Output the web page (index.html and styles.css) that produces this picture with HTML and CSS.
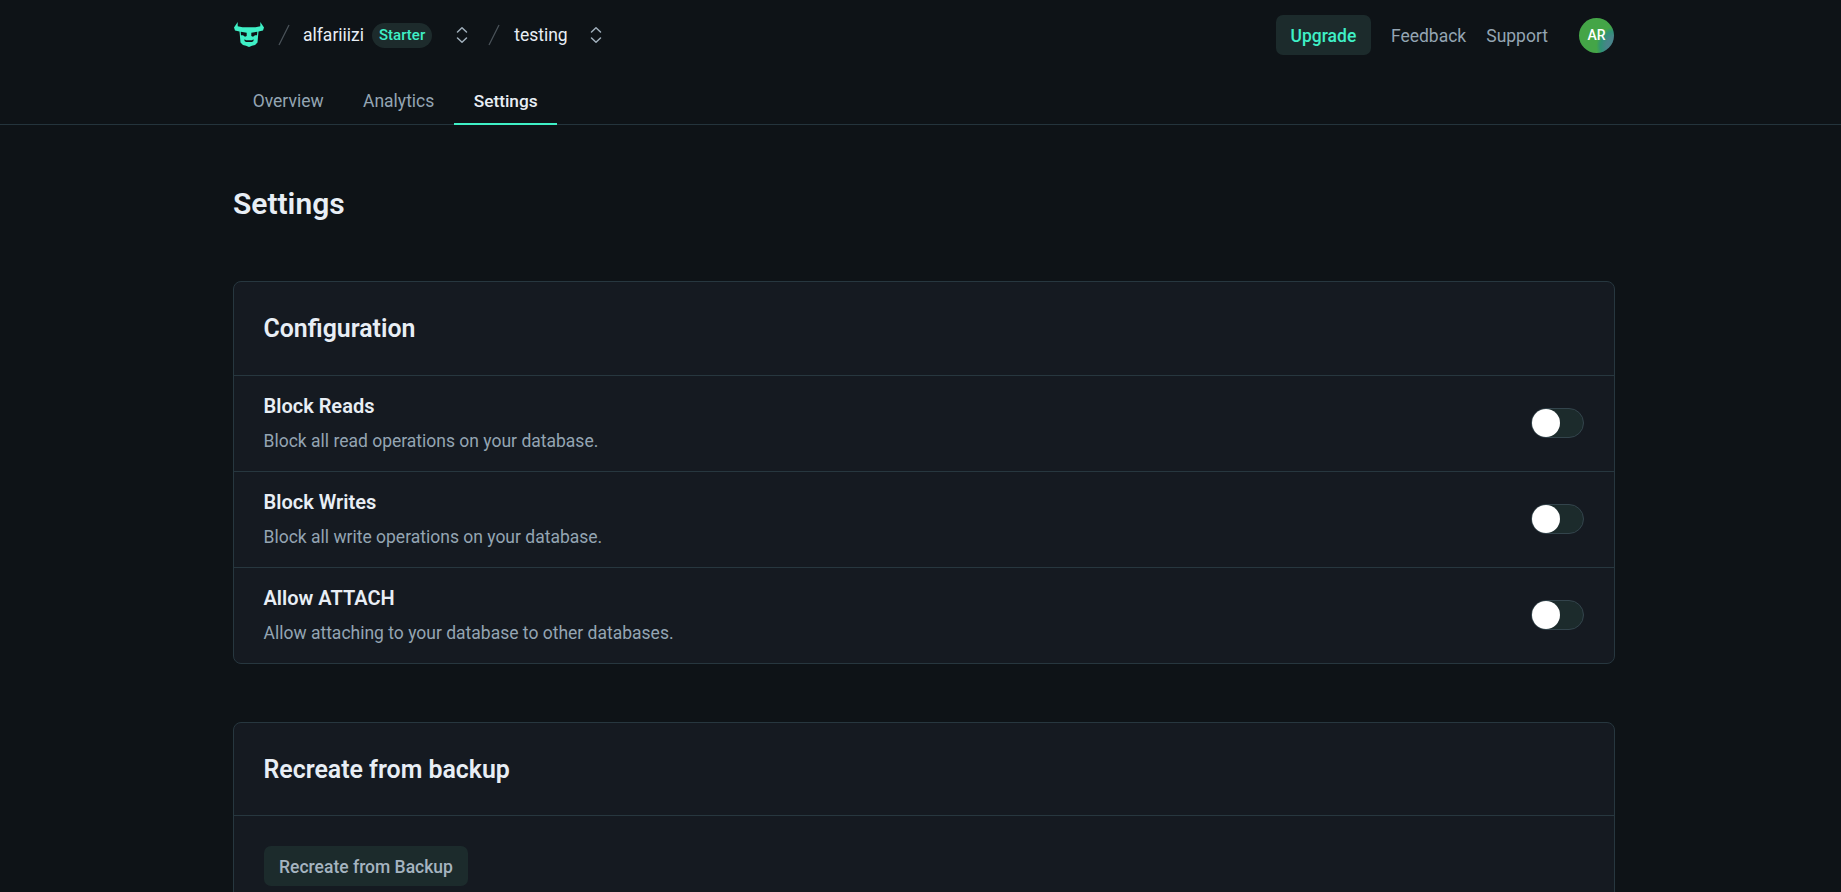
FILE: index.html
```html
<!DOCTYPE html>
<html lang="en">
<head>
<meta charset="utf-8">
<title>Settings</title>
<link rel="stylesheet" href="styles.css">
</head>
<body>
<header class="header">
  <div class="container topbar">
    <nav class="crumbs">
      <svg class="logo" viewBox="0 0 32 26" width="32" height="26"><path fill="#3ff0c6" d="M4.700 0 1 5.500 2 8.500 6.500 9.500 7 15 7.500 20.500 10 23 13 23.700 16 25 19 23.700 22 23 24.500 20.500 25 15 25.500 9.500 30 8.500 31 5.500 27.300 0V4.300L22.500 5.200H9.500L4.700 4.300Z"/><path fill="#0e1317" d="M7.700 9.700 13.700 10.800V14L12 14.800 10 13.200H8ZM24.300 9.700 18.300 10.800V14L20 14.800 22 13.200H24ZM11.500 17.300 13 18.300H19L20.500 17.300V19L19 20H13L11.500 19Z"/></svg>
      <svg class="slash slash-one" viewBox="0 0 12 22" width="12" height="22"><path d="M1 21 11 1"/></svg>
      <span class="crumb crumb-org">alfariiizi</span>
      <span class="badge">Starter</span>
      <svg class="chevrons chevrons-one" viewBox="0 0 12 18" width="12" height="18"><path d="M1.500 6 6 1.800 10.500 6M1.500 12 6 16.200 10.500 12"/></svg>
      <svg class="slash slash-two" viewBox="0 0 12 22" width="12" height="22"><path d="M1 21 11 1"/></svg>
      <span class="crumb crumb-db">testing</span>
      <svg class="chevrons chevrons-two" viewBox="0 0 12 18" width="12" height="18"><path d="M1.500 6 6 1.800 10.500 6M1.500 12 6 16.200 10.500 12"/></svg>
    </nav>
    <div class="actions">
      <button class="button upgrade">Upgrade</button>
      <a class="link">Feedback</a>
      <a class="link">Support</a>
      <span class="avatar">AR</span>
    </div>
  </div>
  <nav class="container tabs">
    <a class="tab">Overview</a>
    <a class="tab">Analytics</a>
    <a class="tab active">Settings</a>
  </nav>
</header>
<main class="container">
  <h1 class="title">Settings</h1>
  <section class="card">
    <h2 class="card-title">Configuration</h2>
    <div class="row">
      <div><h3 class="row-title">Block Reads</h3><p class="row-text">Block all read operations on your database.</p></div>
      <span class="toggle"></span>
    </div>
    <div class="row">
      <div><h3 class="row-title">Block Writes</h3><p class="row-text">Block all write operations on your database.</p></div>
      <span class="toggle"></span>
    </div>
    <div class="row">
      <div><h3 class="row-title">Allow ATTACH</h3><p class="row-text">Allow attaching to your database to other databases.</p></div>
      <span class="toggle"></span>
    </div>
  </section>
  <section class="card card-backup">
    <h2 class="card-title">Recreate from backup</h2>
    <div class="card-body"><button class="button recreate">Recreate from Backup</button></div>
  </section>
</main>
</body>
</html>
```
FILE: styles.css
```css
* { box-sizing: border-box; }
body {
  display: flex;
  flex-direction: column;
  height: 100vh;
  margin: 0;
  overflow: hidden;
  background: #0e1317;
  color: #e8eef5;
  font: 17.5px/24px Roboto, sans-serif;
}
h1, h2, h3, p { margin: 0; }
main { display: flex; flex: 1; flex-direction: column; min-height: 0; overflow: hidden; }
.container { width: 1382px; margin-left: 233px; }
.header { flex: none; height: 125px; border-bottom: 1px solid #24343c; }
.topbar { display: flex; justify-content: space-between; height: 70px; padding-right: 1px; }
.crumbs, .actions { display: flex; align-items: center; }
.crumb { color: #e8eef5; }
.slash { fill: none; stroke: #4a5359; stroke-width: 1.3; }
.slash-one { margin-left: 13px; }
.slash-two { margin-left: 20px; }
.crumb-org { margin-left: 13px; }
.crumb-db { margin-left: 14px; }
.badge {
  height: 25px;
  margin-left: 8px;
  padding: 0 7px;
  border-radius: 13px;
  background: #1d2b2c;
  color: #3ff0c6;
  font-size: 15px;
  font-weight: 500;
  line-height: 24px;
}
.chevrons { fill: none; stroke: #a0afbb; stroke-width: 1.5; stroke-linecap: round; stroke-linejoin: round; }
.chevrons-one { margin-left: 24px; }
.chevrons-two { margin-left: 22px; }
.button {
  height: 40px;
  padding: 0 15px;
  border: 0;
  border-radius: 7px;
  background: #1c2b2c;
  font: 500 17.5px/24px Roboto, sans-serif;
}
.upgrade { width: 95px; padding: 1px 0 0; color: #3ff0c6; }
.link { margin-left: 20px; padding-top: 2px; color: #94a5b3; }
.avatar {
  width: 35px;
  height: 35px;
  margin-left: 31px;
  border-radius: 50%;
  background: radial-gradient(circle at 105% 80%, #48848a 0 20%, #2f9275 33%, #44a547 42%);
  color: #fff;
  font-size: 14px;
  font-weight: 500;
  line-height: 35px;
  text-align: center;
}
.tabs { display: flex; height: 55px; }
.tab { padding: 19px 19.7px 0; color: #94a5b3; }
.active { border-bottom: 2px solid #3ff0c6; color: #e8eef5; font-size: 17.3px; font-weight: 500; }
.title { margin-top: 59px; font-size: 30px; font-weight: 600; line-height: 40px; }
.card {
  flex: none;
  margin-top: 57px;
  border: 1px solid #27373f;
  border-radius: 8px;
  background: #151a21;
}
.card-backup { height: 300px; margin-top: 58px; }
.card-title { height: 93px; padding: 31px 29.500px; font-size: 24.9px; font-weight: 600; line-height: 32px; }
.card-backup .card-title { height: 92px; }
.row {
  display: flex;
  align-items: center;
  justify-content: space-between;
  height: 96px;
  padding: 0 30px 2px 29.500px;
  border-top: 1px solid #27373f;
}
.row-title { font-size: 20px; font-weight: 600; line-height: 26px; }
.row-text { margin-top: 10px; color: #94a5b3; }
.toggle { display: flex; align-items: center; width: 53px; height: 30px; border: 1px solid #33444c; border-radius: 15px; background: #1c2b2c; }
.toggle::before { content: ""; width: 28px; height: 28px; border-radius: 50%; background: #fff; }
.card-body { padding: 30px; border-top: 1px solid #27373f; }
.recreate { width: 204px; padding: 1px 0 0; color: #a5b4c0; }
```
